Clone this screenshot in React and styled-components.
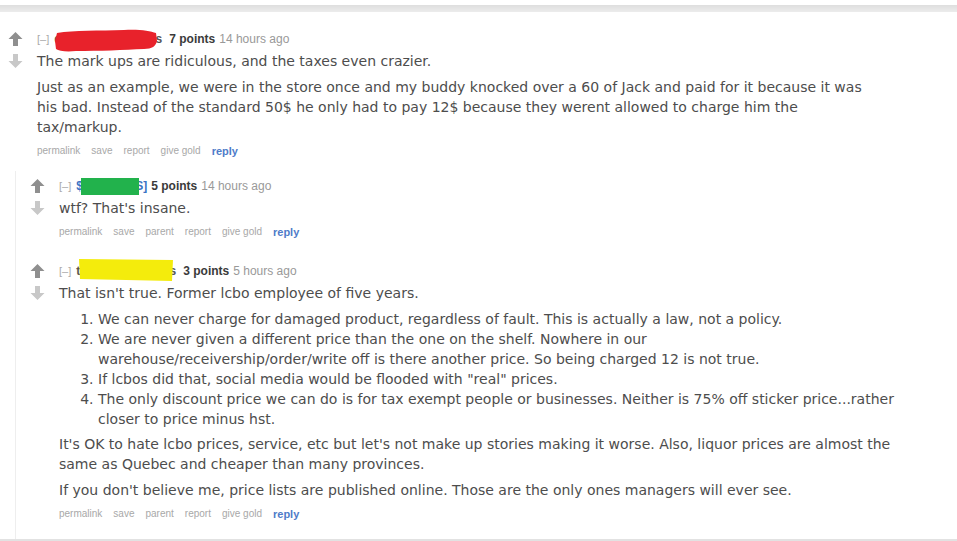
import React from 'react';
import styled, { createGlobalStyle } from 'styled-components';

const GlobalStyle = createGlobalStyle`
  html, body {
    margin: 0;
    padding: 0;
    background: #fff;
  }
  body {
    width: 957px;
    height: 541px;
    overflow: hidden;
  }
`;

const Page = styled.div`
  position: relative;
  width: 957px;
  height: 541px;
  padding-top: 5px;
  box-sizing: border-box;
  font-family: 'DejaVu Sans', Verdana, sans-serif;
`;

const TopBar = styled.div`
  height: 7px;
  background: linear-gradient(#dedede, #ececec);
`;

const BottomLine = styled.div`
  position: absolute;
  left: 0;
  right: 0;
  bottom: 0;
  height: 2px;
  background: #e2e2e2;
`;

const Listing = styled.div`
  padding: 19px 0 0 8px;
`;

const Row = styled.div`
  display: flex;
  margin-top: ${(p) => p.$top || 0}px;
`;

const Arrows = styled.div`
  width: 29px;
  flex: none;
  display: flex;
  flex-direction: column;
  align-items: flex-start;
  gap: 8px;
  padding-top: 1px;
`;

const Entry = styled.div`
  flex: 1;
  min-width: 0;
`;

const Tagline = styled.div`
  position: relative;
  height: 16px;
  line-height: 16px;
  font-family: 'Liberation Sans', Arial, sans-serif;
  font-size: 12px;
  color: #999;
  white-space: nowrap;
`;

const Collapse = styled.span`
  color: #aaa;
  font-size: 11px;
  margin-right: 5px;
`;

const Author = styled.span`
  display: inline-flex;
  justify-content: space-between;
  vertical-align: top;
  width: ${(p) => p.$w}px;
  color: ${(p) => p.$color || '#555'};
  font-weight: bold;
`;

const Score = styled.span`
  color: #3a3a3a;
  font-weight: bold;
  margin: 0 4px 0 ${(p) => p.$gap || 6}px;
`;

const Blob = styled.svg`
  position: absolute;
  top: ${(p) => p.$top}px;
  left: ${(p) => p.$left}px;
  pointer-events: none;
`;

const Body = styled.div`
  margin-top: 4px;
  font-size: 14px;
  line-height: 20px;
  color: #4d4d4d;
  white-space: nowrap;

  p {
    margin: 0 0 6px;
  }
  p:last-child {
    margin-bottom: 0;
  }
`;

const List = styled.ol`
  margin: 3px 0 5px;
  padding-left: 39px;
`;

const Buttons = styled.ul`
  display: flex;
  gap: 11px;
  margin: 7px 0 0;
  padding: 0;
  list-style: none;
  font-family: 'Liberation Sans', Arial, sans-serif;
  font-size: 10px;
  line-height: 14px;
`;

const Button = styled.li`
  color: ${(p) => (p.$reply ? '#4f7cc9' : '#a8a8a8')};
  font-weight: ${(p) => (p.$reply ? 'bold' : 'normal')};
  font-size: ${(p) => (p.$reply ? '11px' : '10px')};
`;

const Child = styled.div`
  margin-top: 13px;
  margin-left: 7px;
  padding: 7px 0 18px 14px;
  border-left: 1px solid #eeeeee;
`;

const ArrowIcon = ({ down }) => (
  <svg width="15" height="14" viewBox="0 0 15 14">
    {down ? (
      <path d="M5 0h5v7h4.5L7.5 14 0.5 7H5z" fill="#c8c8c8" />
    ) : (
      <path d="M5 14h5V7h4.5L7.5 0 0.5 7H5z" fill="#8f8f8f" />
    )}
  </svg>
);

const VoteArrows = () => (
  <Arrows>
    <ArrowIcon />
    <ArrowIcon down />
  </Arrows>
);

const ButtonRow = ({ parent }) => (
  <Buttons>
    <Button>permalink</Button>
    <Button>save</Button>
    {parent && <Button>parent</Button>}
    <Button>report</Button>
    <Button>give gold</Button>
    <Button $reply>reply</Button>
  </Buttons>
);

const App = () => (
  <Page>
    <GlobalStyle />
    <TopBar />
    <Listing>
      <Row>
        <VoteArrows />
        <Entry>
          <Tagline>
            <Collapse>[–]</Collapse>
            <Author $w={108}>
              <span>d</span>
              <span>s</span>
            </Author>
            <Score $gap={7}>7 points</Score>14 hours ago
            <Blob $top={-2} $left={17} width="104" height="24" viewBox="0 0 104 24">
              <path
                d="M3 4 C20 1 45 2 70 1 C85 0 96 2 102 4 L103 12 C102 17 98 20 90 20 C70 21 45 22 22 22 C12 23 5 22 2 20 L1 12 Z"
                fill="#e8222b"
              />
            </Blob>
          </Tagline>
          <Body>
            <p>The mark ups are ridiculous, and the taxes even crazier.</p>
            <p>
              Just as an example, we were in the store once and my buddy knocked over a 60 of Jack and paid for it because it was
              <br />
              his bad. Instead of the standard 50$ he only had to pay 12$ because they werent allowed to charge him the
              <br />
              tax/markup.
            </p>
          </Body>
          <ButtonRow />
        </Entry>
      </Row>

      <Child>
        <Row>
          <VoteArrows />
          <Entry>
            <Tagline>
              <Collapse>[–]</Collapse>
              <Author $w={71} $color="#3b73c4">
                <span>$</span>
                <span>S]</span>
              </Author>
              <Score $gap={4}>5 points</Score>14 hours ago
              <Blob $top={0} $left={22} width="58" height="17" viewBox="0 0 58 17">
                <rect x="0" y="0" width="58" height="17" fill="#22b24c" />
              </Blob>
            </Tagline>
            <Body>
              <p>wtf? That's insane.</p>
            </Body>
            <ButtonRow parent />
          </Entry>
        </Row>

        <Row $top={24}>
          <VoteArrows />
          <Entry>
            <Tagline>
              <Collapse>[–]</Collapse>
              <Author $w={100}>
                <span>t</span>
                <span>s</span>
              </Author>
              <Score $gap={7}>3 points</Score>5 hours ago
              <Blob $top={-5} $left={20} width="94" height="23" viewBox="0 0 94 23">
                <path d="M0 1 L94 2 L93 23 L1 21 Z" fill="#f4ec0c" />
              </Blob>
            </Tagline>
            <Body>
              <p>That isn't true. Former lcbo employee of five years.</p>
              <List>
                <li>We can never charge for damaged product, regardless of fault. This is actually a law, not a policy.</li>
                <li>
                  We are never given a different price than the one on the shelf. Nowhere in our
                  <br />
                  warehouse/receivership/order/write off is there another price. So being charged 12 is not true.
                </li>
                <li>If lcbos did that, social media would be flooded with "real" prices.</li>
                <li>
                  The only discount price we can do is for tax exempt people or businesses. Neither is 75% off sticker price...rather
                  <br />
                  closer to price minus hst.
                </li>
              </List>
              <p>
                It's OK to hate lcbo prices, service, etc but let's not make up stories making it worse. Also, liquor prices are almost the
                <br />
                same as Quebec and cheaper than many provinces.
              </p>
              <p>If you don't believe me, price lists are published online. Those are the only ones managers will ever see.</p>
            </Body>
            <ButtonRow parent />
          </Entry>
        </Row>
      </Child>
    </Listing>
    <BottomLine />
  </Page>
);

export default App;
